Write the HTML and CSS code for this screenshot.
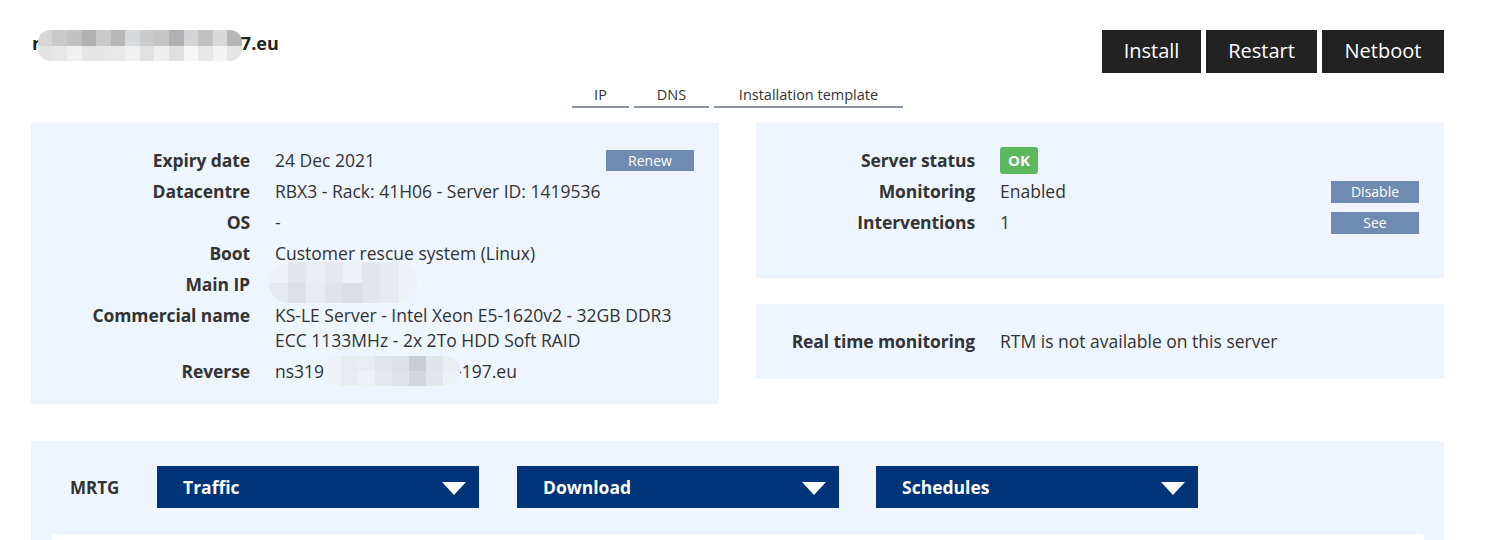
FILE: index.html
```html
<!DOCTYPE html>
<html lang="en">
<head>
<meta charset="utf-8">
<title>Server</title>
<link rel="stylesheet" href="styles.css">
</head>
<body>
<div class="page">
  <header class="header">
    <h1 class="title">n<span class="pill pill-title"><i style="background:#d6d6d6"></i><i style="background:#c9c9c9"></i><i style="background:#c2c2c2"></i><i style="background:#b1b1b1"></i><i style="background:#c9c9c9"></i><i style="background:#b8b8b8"></i><i style="background:#d7dadd"></i><i style="background:#cacaca"></i><i style="background:#c6c5c4"></i><i style="background:#b0b0b2"></i><i style="background:#d3d5d6"></i><i style="background:#c2c1c0"></i><i style="background:#d8d9da"></i><i style="background:#b8b6b5"></i><i style="background:#e4e4e4"></i><i style="background:#e7e7e7"></i><i style="background:#f1f1f1"></i><i style="background:#e6e6e6"></i><i style="background:#e6e6e6"></i><i style="background:#e9e9e9"></i><i style="background:#f1f1f1"></i><i style="background:#e1e1e1"></i><i style="background:#efefef"></i><i style="background:#e0e0e0"></i><i style="background:#f6f6f6"></i><i style="background:#e8e8e8"></i><i style="background:#f3f3f3"></i><i style="background:#e5e5e5"></i></span>7.eu</h1>
    <div class="actions">
      <button class="btn-dark">Install</button>
      <button class="btn-dark">Restart</button>
      <button class="btn-dark">Netboot</button>
    </div>
  </header>

  <nav class="tabs">
    <a class="tab">IP</a>
    <a class="tab">DNS</a>
    <a class="tab">Installation template</a>
  </nav>

  <div class="columns">
    <section class="panel panel-left">
      <div class="grid">
        <div class="label">Expiry date</div>
        <div class="value value-split"><span>24 Dec 2021</span><button class="btn-small">Renew</button></div>
        <div class="label">Datacentre</div>
        <div class="value">RBX3 - Rack: 41H06 - Server ID: 1419536</div>
        <div class="label">OS</div>
        <div class="value">-</div>
        <div class="label">Boot</div>
        <div class="value">Customer rescue system (Linux)</div>
        <div class="label">Main IP</div>
        <div class="value value-ip"><span class="pill pill-ip"><i style="background:#eef1f5"></i><i style="background:#e3e7ec"></i><i style="background:#e9edf2"></i><i style="background:#e4e8ee"></i><i style="background:#eef1f5"></i><i style="background:#e2e6eb"></i><i style="background:#e6eaef"></i><i style="background:#eef2f6"></i><i style="background:#e6eaef"></i><i style="background:#dde1e7"></i><i style="background:#e8ecf1"></i><i style="background:#e0e4ea"></i><i style="background:#dadfe5"></i><i style="background:#e2e6ec"></i><i style="background:#e6eaef"></i><i style="background:#eef1f5"></i></span></div>
        <div class="label">Commercial name</div>
        <div class="value">KS-LE Server - Intel Xeon E5-1620v2 - 32GB DDR3 ECC 1133MHz - 2x 2To HDD Soft RAID</div>
        <div class="label">Reverse</div>
        <div class="value">ns319<span class="pill pill-rev"><i style="background:#eef1f5"></i><i style="background:#e7ebf0"></i><i style="background:#e9ecf1"></i><i style="background:#e2e6ec"></i><i style="background:#dde1e7"></i><i style="background:#c9cdd3"></i><i style="background:#e1e5eb"></i><i style="background:#eaedf2"></i><i style="background:#eef1f5"></i><i style="background:#e8ebf0"></i><i style="background:#eef1f5"></i><i style="background:#e4e8ed"></i><i style="background:#dfe3e9"></i><i style="background:#d4d8de"></i><i style="background:#e3e7ec"></i><i style="background:#eef1f5"></i></span>-197.eu</div>
      </div>
    </section>

    <div class="stack">
      <section class="panel panel-status">
        <div class="grid grid-3">
          <div class="label">Server status</div>
          <div class="value"><span class="badge-ok">OK</span></div>
          <div></div>
          <div class="label">Monitoring</div>
          <div class="value">Enabled</div>
          <div class="cell-btn"><button class="btn-small">Disable</button></div>
          <div class="label">Interventions</div>
          <div class="value">1</div>
          <div class="cell-btn"><button class="btn-small">See</button></div>
        </div>
      </section>
      <section class="panel panel-rtm">
        <div class="grid">
          <div class="label">Real time monitoring</div>
          <div class="value">RTM is not available on this server</div>
        </div>
      </section>
    </div>
  </div>

  <section class="panel mrtg">
    <div class="mrtg-bar">
      <span class="mrtg-label">MRTG</span>
      <div class="dropdown"><span>Traffic</span><span class="caret"></span></div>
      <div class="dropdown"><span>Download</span><span class="caret"></span></div>
      <div class="dropdown dropdown-last"><span>Schedules</span><span class="caret"></span></div>
    </div>
    <div class="mrtg-body"></div>
  </section>
</div>
</body>
</html>
```

FILE: styles.css
```css
* { box-sizing: border-box; }
html, body { margin: 0; padding: 0; }
body {
  font-family: "Open Sans", "Liberation Sans", sans-serif;
  color: #333;
  background: #fff;
  overflow: hidden;
  height: 540px;
}
.page {
  width: 1413px;
  margin-left: 31px;
  padding-top: 30px;
}
.header {
  display: flex;
  justify-content: space-between;
  align-items: flex-start;
}
.title {
  margin: 0;
  font-size: 18px;
  font-weight: 700;
  color: #222;
  line-height: 26px;
  padding-left: 1px;
  display: flex;
  align-items: flex-start;
}
.pill {
  display: inline-grid;
  overflow: hidden;
}
.pill i { display: block; }
.pill-title {
  width: 204px;
  height: 31px;
  margin-left: -6px;
  margin-right: -1px;
  grid-template-columns: repeat(14, 1fr);
  grid-template-rows: 16px 15px;
  border-radius: 12px;
}
.actions {
  display: flex;
  gap: 5px;
}
.btn-dark {
  height: 43px;
  background: #222;
  color: #fff;
  border: 0;
  font-family: inherit;
  font-size: 20px;
  line-height: 41px;
  padding: 0 0 2px;
  cursor: pointer;
}
.btn-dark:first-child { width: 99px; }
.btn-dark:nth-child(2) { width: 111px; }
.btn-dark:nth-child(3) { width: 122px; }
.tabs {
  display: flex;
  justify-content: center;
  gap: 5px;
  margin-top: 11px;
}
.tab {
  font-size: 14.5px;
  line-height: 20px;
  padding: 1px 0 1px;
  border-bottom: 2px solid #8995a2;
  color: #333;
  text-align: center;
}
.tab:first-child { width: 57px; }
.tab:nth-child(2) { width: 75px; }
.tab:nth-child(3) { width: 189px; }
.columns {
  display: grid;
  grid-template-columns: 688px 688px;
  column-gap: 37px;
  margin-top: 15px;
  align-items: start;
}
.panel {
  background: #eef5fe;
}
.stack {
  display: flex;
  flex-direction: column;
  gap: 26px;
}
.panel-left { padding: 25px 25px 18px 0; }
.panel-status { padding: 25px 25px 43px 0; }
.panel-rtm { padding: 25px 25px 25px 0; }
.grid {
  display: grid;
  grid-template-columns: 219px 1fr;
  column-gap: 25px;
  row-gap: 6px;
  font-size: 17.5px;
  line-height: 25px;
}
.grid-3 { grid-template-columns: 219px 1fr auto; }
.label {
  text-align: right;
  font-weight: 700;
  font-size: 17.5px;
  color: #333;
  letter-spacing: -0.1px;
}
.value { color: #333; }
.value-split {
  display: flex;
  justify-content: space-between;
  align-items: center;
}
.value-ip { position: relative; }
.pill-ip {
  position: absolute;
  left: -6px;
  top: -10px;
  width: 148px;
  height: 41px;
  grid-template-columns: repeat(8, 1fr);
  grid-template-rows: 1fr 1fr;
  border-radius: 20px;
}
.pill-rev {
  width: 136px;
  height: 30px;
  vertical-align: middle;
  margin: -4px -4px 0 0;
  grid-template-columns: repeat(8, 1fr);
  grid-template-rows: 1fr 1fr;
  border-radius: 14px;
  position: relative;
}
.btn-small {
  width: 88px;
  height: 21px;
  border: 0;
  background: #6f8bb1;
  color: #fff;
  font-family: inherit;
  font-size: 14px;
  line-height: 21px;
  padding: 0;
}
.cell-btn { display: flex; align-items: center; }
.cell-btn .btn-small { height: 22px; }
.badge-ok {
  display: inline-block;
  background: #5cb85c;
  color: #fff;
  font-weight: 700;
  font-size: 15px;
  width: 38px;
  height: 27px;
  line-height: 27px;
  text-align: center;
  border-radius: 3px;
  margin: -1px 0;
  vertical-align: top;
}
.mrtg {
  margin-top: 37px;
  padding: 25px 20px 0 21px;
  height: 99px;
  overflow: hidden;
}
.mrtg-bar {
  display: flex;
  align-items: center;
  gap: 38px;
  padding-left: 18px;
}
.mrtg-label {
  font-size: 17px;
  font-weight: 700;
  color: #333;
  width: 49px;
}
.dropdown {
  width: 322px;
  height: 42px;
  background: #003479;
  color: #fff;
  font-weight: 700;
  font-size: 17.5px;
  display: flex;
  align-items: center;
  justify-content: space-between;
  padding: 0 13px 0 26px;
}
.dropdown-last { margin-left: -1px; }
.caret {
  width: 0;
  height: 0;
  border-left: 12px solid transparent;
  border-right: 12px solid transparent;
  border-top: 13px solid #fff;
  margin-top: 2px;
}
.mrtg-body {
  margin-top: 26px;
  height: 40px;
  background: #fff;
  border-radius: 4px 4px 0 0;
}
```
